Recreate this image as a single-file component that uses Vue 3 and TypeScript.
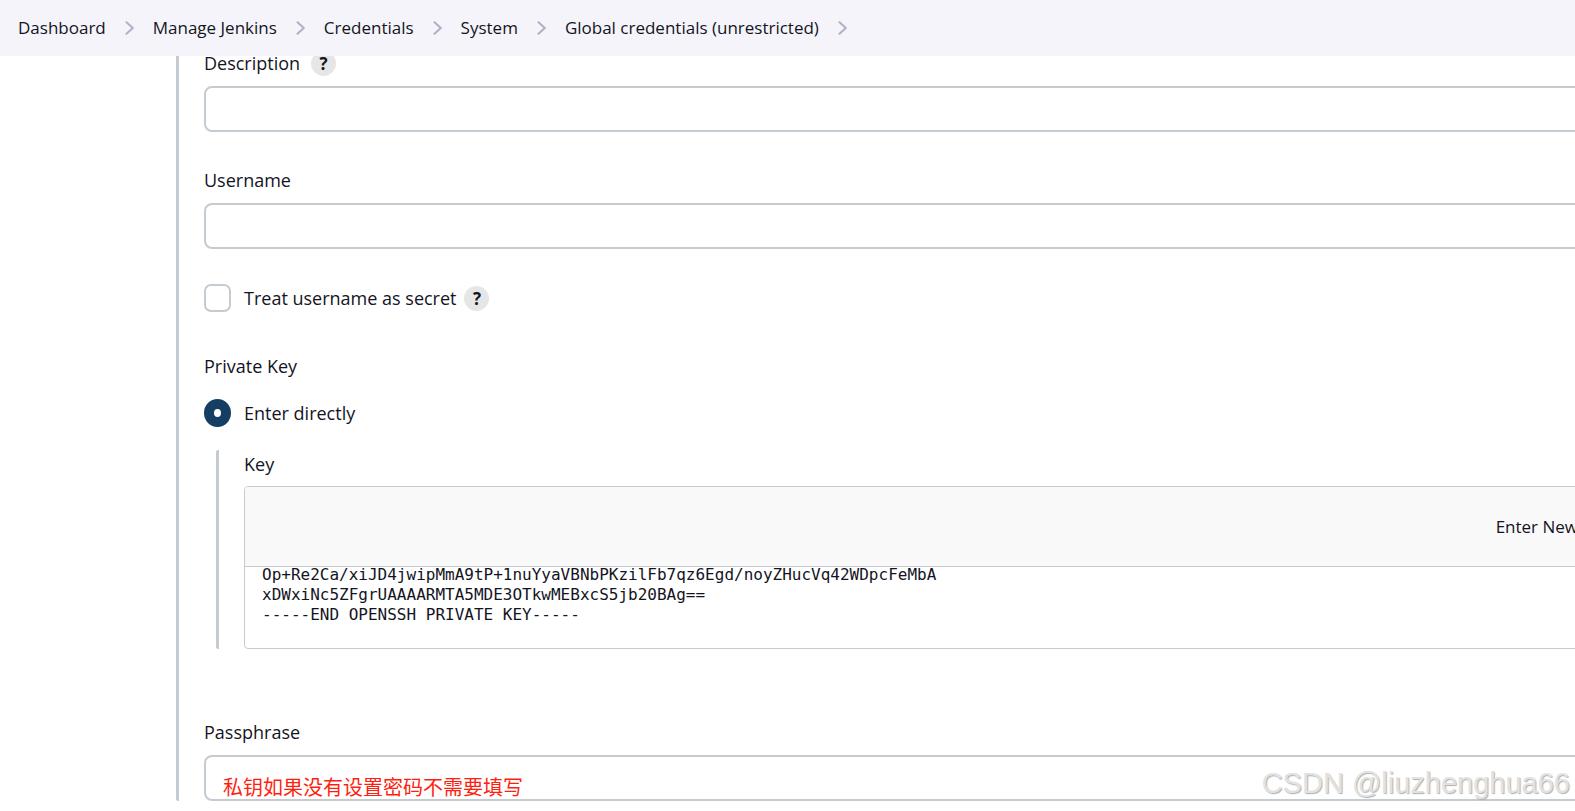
<script setup lang="ts">
import { ref } from 'vue'

const crumbs: string[] = [
  'Dashboard',
  'Manage Jenkins',
  'Credentials',
  'System',
  'Global credentials (unrestricted)',
]

const description = ref('')
const username = ref('')
const passphrase = ref('')
const secretName = ref(false)
const keySource = ref('direct')
const privateKey = ref(
  [
    'Op+Re2Ca/xiJD4jwipMmA9tP+1nuYyaVBNbPKzilFb7qz6Egd/noyZHucVq42WDpcFeMbA',
    'xDWxiNc5ZFgrUAAAARMTA5MDE3OTkwMEBxcS5jb20BAg==',
    '-----END OPENSSH PRIVATE KEY-----',
  ].join('\n'),
)
</script>

<template>
  <div class="page">
    <nav class="breadcrumbs">
      <ol>
        <li v-for="crumb in crumbs" :key="crumb">
          <a href="#">{{ crumb }}</a>
          <svg class="chevron" viewBox="0 0 10 14" aria-hidden="true">
            <path d="M1.5 1.2 L7.8 7 L1.5 12.8" />
          </svg>
        </li>
      </ol>
    </nav>

    <main>
      <form class="credential" @submit.prevent>
        <div class="field">
          <div class="label-row">
            <label for="description">Description</label>
            <button type="button" class="help">?</button>
          </div>
          <input id="description" v-model="description" class="text" type="text" />
        </div>

        <div class="field">
          <div class="label-row"><label for="username">Username</label></div>
          <input id="username" v-model="username" class="text" type="text" />
        </div>

        <div class="option">
          <input id="secret" v-model="secretName" class="check" type="checkbox" />
          <label for="secret">Treat username as secret</label>
          <button type="button" class="help">?</button>
        </div>

        <fieldset class="key-group">
          <legend>Private Key</legend>
          <div class="option">
            <input id="direct" v-model="keySource" class="radio" type="radio" value="direct" />
            <label for="direct">Enter directly</label>
          </div>
          <div class="nested">
            <div class="label-row"><label for="key">Key</label></div>
            <div class="secret-box">
              <div class="secret-head">Enter New</div>
              <textarea id="key" v-model="privateKey" rows="3" spellcheck="false"></textarea>
            </div>
          </div>
        </fieldset>

        <div class="field noted">
          <div class="label-row"><label for="passphrase">Passphrase</label></div>
          <input id="passphrase" v-model="passphrase" class="text" type="password" />
          <span class="note">私钥如果没有设置密码不需要填写</span>
        </div>
      </form>
    </main>

    <div class="watermark">CSDN @liuzhenghua66</div>
  </div>
</template>

<style>
body {
  margin: 0;
  background: #fff;
}
</style>

<style scoped>
.page {
  position: relative;
  min-height: 100vh;
  box-sizing: border-box;
  overflow: hidden;
  font-family: "Open Sans", "Noto Sans", "Noto Sans CJK SC", sans-serif;
  font-size: 18px;
  line-height: 24px;
  color: #14141f;
}

.breadcrumbs {
  position: relative;
  z-index: 1;
  background: #f5f4fa;
  font-size: 17px;
}

ol {
  display: flex;
  align-items: center;
  height: 56px;
  margin: 0;
  padding: 0 18px;
  list-style: none;
}

li {
  display: flex;
  align-items: center;
  white-space: nowrap;
}

a {
  color: inherit;
  text-decoration: none;
}

.chevron {
  width: 10px;
  height: 14px;
  margin: 0 18px 0 19px;
  fill: none;
  stroke: #b1afc6;
  stroke-width: 2;
  stroke-linecap: round;
  stroke-linejoin: round;
}

.credential {
  display: flex;
  flex-direction: column;
  margin: -7px -40px 0 176px;
  padding-left: 25px;
  border-left: 3px solid #c4cbd1;
  border-radius: 2px;
}

.field {
  display: flex;
  flex-direction: column;
  margin-bottom: 34px;
}

.label-row {
  display: flex;
  align-items: center;
  gap: 11px;
  height: 28px;
  margin-bottom: 9px;
}

.text {
  box-sizing: border-box;
  width: 100%;
  height: 46px;
  padding: 0 16px;
  border: 2px solid #c4cbd1;
  border-radius: 8px;
  background: #fff;
  font: inherit;
  outline: none;
}

.help {
  width: 25px;
  height: 25px;
  padding: 0;
  border: 0;
  border-radius: 50%;
  background: #e6e6e6;
  color: #14141f;
  font: 700 17px/25px "Open Sans", sans-serif;
  text-align: center;
}

.option {
  display: flex;
  align-items: center;
  height: 28px;
}

.field + .option {
  margin-top: 1px;
}

.option .help {
  margin-left: 8px;
}

.check,
.radio {
  appearance: none;
  box-sizing: border-box;
  width: 27px;
  height: 28px;
  margin: 0 13px 0 0;
  background: #fff;
}

.check {
  border: 2px solid #c4cbd1;
  border-radius: 7px;
}

.radio {
  border: 2px solid #c4cbd1;
  border-radius: 50%;
}

.radio:checked {
  border: 10px solid #153e62;
}

.key-group {
  min-width: 0;
  margin: 40px 0 69px;
  padding: 0;
  border: 0;
}

legend {
  height: 28px;
  margin-bottom: 19px;
  padding: 0;
  line-height: 28px;
}

.nested {
  margin: 23px 0 0 12px;
  padding-left: 25px;
  border-left: 3px solid #c4cbd1;
  border-radius: 2px;
}

.nested .label-row {
  margin-bottom: 8px;
}

.secret-box {
  display: flex;
  flex-direction: column;
  overflow: hidden;
  border: 1px solid #c4cbd1;
  border-radius: 4px;
}

.secret-head {
  position: relative;
  display: flex;
  align-items: center;
  justify-content: flex-end;
  height: 79px;
  padding-right: 36px;
  border-bottom: 1px solid #c4cbd1;
  background: #f9f9f9;
  font-size: 17px;
}

textarea {
  display: block;
  box-sizing: border-box;
  height: 83px;
  margin: -2px 0 0;
  padding: 0 17px;
  border: 0;
  background: transparent;
  color: #14141f;
  font: 16px/20px "DejaVu Sans Mono", "Liberation Mono", monospace;
  resize: none;
  outline: none;
  overflow: hidden;
}

.noted {
  position: relative;
  margin-bottom: 0;
}

.note {
  position: absolute;
  left: 19px;
  bottom: 2px;
  color: #ff1f10;
  font: 20px/24px "Noto Sans CJK SC", sans-serif;
  white-space: nowrap;
}

.watermark {
  position: absolute;
  right: 5px;
  bottom: 11px;
  color: #e2e2e2;
  font: 29px/34px "Liberation Sans", sans-serif;
  text-shadow: 1px 1px 1px #b0b0b0;
}
</style>
